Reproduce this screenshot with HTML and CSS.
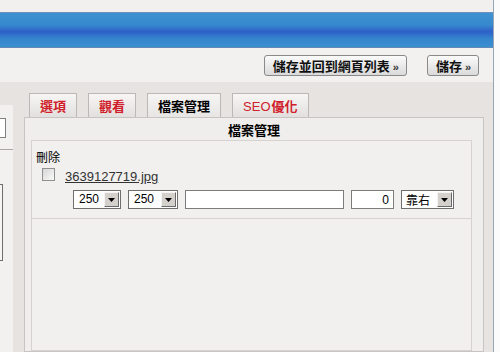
FILE: index.html
```html
<!DOCTYPE html>
<html lang="zh-Hant">
<head>
    <meta charset="UTF-8">
    <meta name="viewport" content="width=device-width, initial-scale=1.0">
    <title>檔案管理</title>
    <link rel="stylesheet" href="styles.css">
</head>
<body>
    <div class="frame">
        <div class="top-strip"></div>
        <div class="banner"></div>
        <div class="toolbar">
            <button type="button" class="btn">儲存並回到網頁列表 <span class="raquo">»</span></button>
            <button type="button" class="btn">儲存 <span class="raquo">»</span></button>
        </div>
        <div class="main">
            <div class="sidebar">
                <div class="side-inner">
                    <div class="side-top">
                        <input type="text" class="side-input">
                    </div>
                    <div class="side-bottom">
                        <textarea class="side-text"></textarea>
                    </div>
                </div>
            </div>
            <div class="tabs-area">
                <ul class="tabs">
                    <li class="tab">選項</li>
                    <li class="tab">觀看</li>
                    <li class="tab active">檔案管理</li>
                    <li class="tab"><span class="latin">SEO</span>優化</li>
                </ul>
                <div class="tab-box">
                    <h3 class="tab-title">檔案管理</h3>
                    <div class="file-box">
                        <div class="file-head">
                            <div class="del-label">刪除</div>
                            <div class="file-line">
                                <span class="check"></span>
                                <a href="#" class="file-link">3639127719.jpg</a>
                            </div>
                            <div class="size-row">
                                <span class="select w1">
                                    <span class="select-value">250</span>
                                    <span class="select-arrow"><svg width="7" height="4" viewBox="0 0 7 4"><path d="M0 0h7L3.5 4z" fill="#000"/></svg></span>
                                </span>
                                <span class="select w2">
                                    <span class="select-value">250</span>
                                    <span class="select-arrow"><svg width="7" height="4" viewBox="0 0 7 4"><path d="M0 0h7L3.5 4z" fill="#000"/></svg></span>
                                </span>
                                <input type="text" class="field caption">
                                <input type="text" class="field number" value="0">
                                <span class="select w3">
                                    <span class="select-value cjk">靠右</span>
                                    <span class="select-arrow"><svg width="7" height="4" viewBox="0 0 7 4"><path d="M0 0h7L3.5 4z" fill="#000"/></svg></span>
                                </span>
                            </div>
                        </div>
                        <div class="file-rest"></div>
                    </div>
                </div>
            </div>
        </div>
    </div>
</body>
</html>
```

FILE: styles.css
```css
body {
    margin: 0;
    background-color: #fbfbfb;
    font-family: "Noto Sans CJK TC", "Liberation Sans", sans-serif;
    font-size: 12px;
    color: #000;
}
.frame {
    width: 493px;
    height: 352px;
    border-right: 1px solid #97a5b5;
    background-color: #e6e3e1;
    overflow: hidden;
}
.top-strip {
    height: 12px;
    background-color: #f1f0ee;
}
.banner {
    height: 34px;
    border-top: 1px solid #6b8fb9;
    border-bottom: 1px solid #5f89b6;
    background: linear-gradient(to bottom, #3d91d0 0%, #3789cf 35%, #2e5fc8 55%, #3485cd 75%, #3b8ecf 100%);
}
.toolbar {
    height: 34px;
    box-sizing: border-box;
    padding: 7px 14px 0 0;
    background-color: #f2f1ef;
    display: flex;
    justify-content: flex-end;
    align-items: flex-start;
    gap: 20px;
}
.btn {
    height: 21px;
    padding: 0 7px 0 8px;
    border: 1px solid #8a8a8a;
    border-radius: 3px;
    background: linear-gradient(to bottom, #fbfbfb, #dadada);
    font-family: "Noto Sans CJK TC", sans-serif;
    font-size: 13px;
    font-weight: bold;
    line-height: 19px;
    color: #111;
    cursor: pointer;
}
.raquo {
    font-family: "Liberation Sans", sans-serif;
    font-size: 11px;
    color: #333;
}
.main {
    height: 270px;
    display: flex;
}
.sidebar {
    width: 13px;
    margin-top: 23px;
    overflow: hidden;
    background-color: #f2f1ef;
}
.side-inner {
    width: 200px;
    margin-left: -187px;
}
.side-top {
    height: 45px;
    box-sizing: border-box;
    padding-top: 13px;
    border-bottom: 1px solid #aaa7a4;
    display: flex;
    justify-content: flex-end;
}
.side-input {
    width: 120px;
    height: 20px;
    box-sizing: border-box;
    margin: 0 7px 0 0;
    border: 1px solid #7f7f7f;
    background: #fff;
}
.side-bottom {
    padding-top: 34px;
    display: flex;
    justify-content: flex-end;
}
.side-text {
    width: 150px;
    height: 77px;
    box-sizing: border-box;
    margin: 0 10px 0 0;
    border: 1px solid #6e6e6e;
    background: #f6f5f3;
    resize: none;
}
.tabs-area {
    width: 460px;
    margin-left: 11px;
    padding-top: 11px;
    display: flex;
    flex-direction: column;
}
.tabs {
    list-style-type: none;
    margin: 0 0 -1px 0;
    padding: 0 0 0 5px;
    display: flex;
    gap: 11px;
}
.tab {
    height: 25px;
    box-sizing: border-box;
    padding: 0 10px;
    border: 1px solid #bcb8b5;
    background: linear-gradient(to bottom, #f7f6f5, #e2e0de);
    font-size: 13px;
    font-weight: bold;
    line-height: 23px;
    color: #d0202a;
}
.tab .latin {
    font-family: "Liberation Sans", sans-serif;
    font-weight: normal;
    margin-right: 1px;
}
.tab.active {
    color: #000;
    background: linear-gradient(to bottom, #f6f5f4, #e8e6e4);
}
.tab-box {
    flex: 1;
    border: 1px solid #c8c4c1;
    background-color: #efeeec;
    display: flex;
    flex-direction: column;
}
.tab-title {
    margin: 0;
    height: 22px;
    font-size: 13px;
    font-weight: bold;
    line-height: 24px;
    text-align: center;
}
.file-box {
    flex: 1;
    margin: 0 11px 0 6px;
    border: 1px solid #d5d2cf;
    background-color: #f1f0ee;
}
.file-head {
    padding: 9px 0 9px 4px;
    border-bottom: 1px solid #d5d2cf;
}
.del-label {
    height: 14px;
    line-height: 14px;
    font-size: 12px;
}
.file-line {
    height: 15px;
    margin-top: 3px;
    display: flex;
    align-items: center;
}
.check {
    width: 13px;
    height: 13px;
    box-sizing: border-box;
    margin-left: 6px;
    border: 1px solid #8f9090;
    background: linear-gradient(135deg, #d6d6d6, #fafafa);
}
.file-link {
    margin-left: 10px;
    padding-top: 4px;
    font-family: "Liberation Sans", sans-serif;
    font-size: 13px;
    color: #333;
}
.size-row {
    margin: 8px 0 0 37px;
    height: 19px;
    display: flex;
    gap: 7px;
}
.select {
    height: 19px;
    box-sizing: border-box;
    padding: 1px;
    border: 1px solid #6f6f6f;
    background-color: #fff;
    display: flex;
    align-items: center;
}
.w1 { width: 48px; }
.w2 { width: 50px; }
.w3 { width: 53px; }
.select-value {
    flex: 1;
    padding-left: 4px;
    font-family: "Liberation Sans", sans-serif;
    font-size: 12px;
    line-height: 15px;
}
.select-value.cjk {
    font-family: "Noto Sans CJK TC", sans-serif;
    padding-left: 3px;
}
.select-arrow {
    width: 15px;
    height: 15px;
    box-sizing: border-box;
    border: 1px solid;
    border-color: #f4f4f4 #6a6a6a #6a6a6a #f4f4f4;
    background-color: #d4d1cc;
    display: flex;
    align-items: center;
    justify-content: center;
}
.field {
    height: 19px;
    box-sizing: border-box;
    margin: 0;
    padding: 0 4px;
    border: 1px solid #7c7c7c;
    background-color: #fff;
    font-family: "Liberation Sans", sans-serif;
    font-size: 12px;
}
.caption { width: 159px; }
.number {
    width: 43px;
    text-align: right;
}
```
